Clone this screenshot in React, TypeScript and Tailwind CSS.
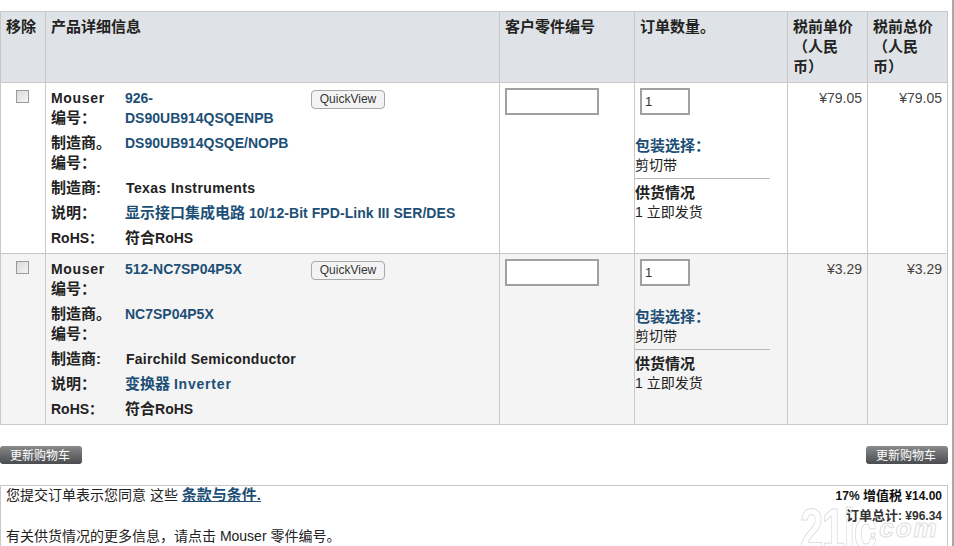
const sans = "font-['Arial','Liberation_Sans','Noto_Sans_CJK_SC',sans-serif]";
const cols = "grid grid-cols-[46px_454px_135px_153px_80px_80px]";
const cjk = "text-[15px]";

function Row({ bg, mouser, mfr, maker, makerTrack, desc, price, priceTop }: { bg: string; mouser: string[]; mfr: string; maker: string; makerTrack: string; desc: React.ReactNode; price: string; priceTop: string }) {
  const label = "w-[74px] shrink-0 font-bold text-[#222]";
  const link = "font-bold text-[#1d4f76]";
  return (
    <div className={`${cols} h-[171px] border-b border-[#c8c8c8] ${bg}`}>
      <div className="border-l border-r border-[#c8c8c8] flex justify-center pt-[7px]">
        <input type="checkbox" className="appearance-none block w-[13px] h-[13px] mr-[1px] border border-[#9a9a9a] bg-gradient-to-br from-[#d8d8d8] to-[#f6f6f6]" />
      </div>
      <div className="border-r border-[#c8c8c8] pl-[5px] pt-[5px] text-[14px] leading-[20px]">
        <div className="flex h-[45px] relative">
          <div className={label}>
            <div className="tracking-[0.7px]">Mouser</div>
            <div className={cjk}>编号：</div>
          </div>
          <div className={link}>{mouser.map((m) => <div key={m}>{m}</div>)}</div>
          <div className="absolute left-[260px] top-[2px] w-[74px] h-[19px] rounded-[4px] border border-[#a8a8a8] bg-[#f3f3f3] text-[12px] leading-[17px] text-center text-[#333]">QuickView</div>
        </div>
        <div className="flex h-[45px]">
          <div className={label}>
            <div className={cjk}>制造商。</div>
            <div className={cjk}>编号：</div>
          </div>
          <div className={link}>{mfr}</div>
        </div>
        <div className="flex h-[25px]">
          <div className={`${label} ${cjk}`}>制造商:</div>
          <div className={`font-bold text-[#222] pl-[1px] ${makerTrack}`}>{maker}</div>
        </div>
        <div className="flex h-[25px]">
          <div className={`${label} ${cjk}`}>说明：</div>
          <div className={link}>{desc}</div>
        </div>
        <div className="flex h-[25px]">
          <div className={label}>RoHS：</div>
          <div className="font-bold text-[#222]"><span className={cjk}>符合</span>RoHS</div>
        </div>
      </div>
      <div className="border-r border-[#c8c8c8] pl-[5px] pt-[5px]">
        <input className="block w-[94px] h-[27px] border-2 border-[#a0a0a0] bg-white" />
      </div>
      <div className="border-r border-[#c8c8c8] pt-[5px] text-[14px] leading-[20px] text-[#222]">
        <input defaultValue="1" className="block ml-[5px] w-[50px] h-[27px] border-2 border-[#a0a0a0] bg-white px-[3px] text-[13px] text-[#333]" />
        <div className={`mt-[21px] font-bold text-[#1d4f76] ${cjk}`}>包装选择：</div>
        <div className="h-[23px] leading-[18px] border-b border-[#b8b8b8] w-[135px]">剪切带</div>
        <div className={`mt-[4px] font-bold ${cjk}`}>供货情况</div>
        <div className="mt-[-1px]">1 立即发货</div>
      </div>
      <div className={`border-r border-[#c8c8c8] pr-[5px] text-right text-[14px] leading-[18px] text-[#444] ${priceTop}`}>{price}</div>
      <div className={`border-r border-[#c8c8c8] pr-[5px] text-right text-[14px] leading-[18px] text-[#444] ${priceTop}`}>{price}</div>
    </div>
  );
}

function Btn() {
  return (
    <div className="w-[82px] h-[18px] rounded-[3px] bg-gradient-to-b from-[#8a8a8a] to-[#4a4c50] text-white text-[12px] leading-[21px] pl-[10px]">更新购物车</div>
  );
}

export default function App() {
  const th = "border-r border-[#c8c8c8] pt-[5px] pl-[5px] font-bold text-[15px] leading-[20px] text-[#222]";
  return (
    <div className={`${sans} relative w-[954px] h-[546px] bg-white overflow-hidden`}>
      <div className="absolute right-0 top-0 bottom-0 w-[2px] bg-[#a8a8a8]" />
      <div className="absolute left-[800px] top-[494px] w-[152px] h-[52px] overflow-hidden flex items-end font-['Liberation_Sans',sans-serif] text-white font-bold [-webkit-text-stroke:1px_#dedede]">
        <span className="block w-[70px] shrink-0 origin-left scale-x-[0.72] text-[58px] leading-[58px] tracking-[-2px] mb-[-12px]">21ic</span>
        <span className="text-[26px] leading-[26px] italic tracking-[2px] shrink-0 mb-[5px]">.com</span>
      </div>
      <div className="pt-[11px] w-[948px]">
        <div className={`${cols} h-[72px] bg-[#dfe2e6] border-t border-b border-[#c8c8c8]`}>
          <div className={`${th} border-l`}>移除</div>
          <div className={th}>产品详细信息</div>
          <div className={th}>客户零件编号</div>
          <div className={th}>订单数量。</div>
          <div className={th}>
            <div>税前单价</div>
            <div>（人民</div>
            <div>币）</div>
          </div>
          <div className={th}>
            <div>税前总价</div>
            <div>（人民</div>
            <div>币）</div>
          </div>
        </div>
        <Row bg="bg-white" priceTop="pt-[6px]" mouser={["926-", "DS90UB914QSQENPB"]} mfr="DS90UB914QSQE/NOPB" maker="Texas Instruments" makerTrack="tracking-[0.4px]" desc={<><span className={cjk}>显示接口集成电路</span> <span className="tracking-[0.06px]">10/12-Bit FPD-Link III SER/DES</span></>} price="¥79.05" />
        <Row bg="bg-[#f4f4f4]" priceTop="pt-[6px]" mouser={["512-NC7SP04P5X"]} mfr="NC7SP04P5X" maker="Fairchild Semiconductor" makerTrack="tracking-[0.25px]" desc={<><span className={cjk}>变换器</span> <span className="tracking-[0.8px]">Inverter</span></>} price="¥3.29" />
      </div>
      <div className="flex justify-between w-[948px] mt-[21px]">
        <Btn />
        <Btn />
      </div>
      <div className="relative mt-[21px] w-[948px] h-[70px] border border-[#c8c8c8] pl-[5px] text-[14px] leading-[20px] text-[#222]">
        <div className="mt-[-1px]">您提交订单表示您同意 这些 <span className="font-bold text-[15px] text-[#1d4f76] underline">条款与条件.</span></div>
        <div className="mt-[21px]">有关供货情况的更多信息，请点击 Mouser 零件编号。</div>
        <div className="absolute right-[5px] top-[0px] text-right text-[12px] leading-[19px] font-bold text-[#111]">
          <div>17% <span className="text-[13px]">增值税</span> ¥14.00</div>
          <div className="text-[#333]"><span className="text-[13px]">订单总计</span>: ¥96.34</div>
        </div>
      </div>
    </div>
  );
}
